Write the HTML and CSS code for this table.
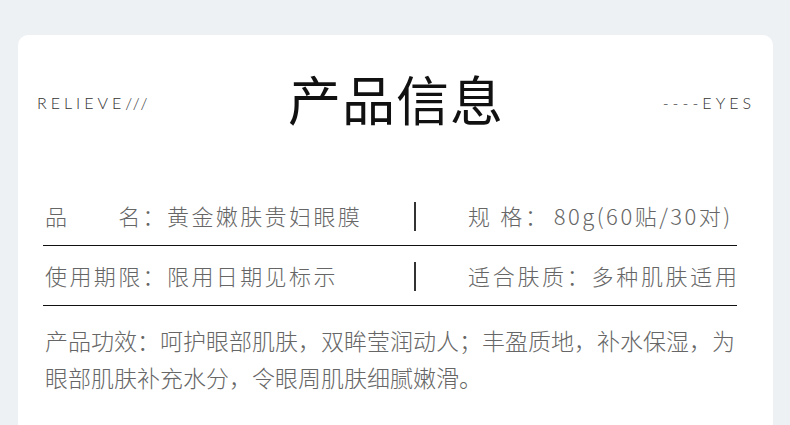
FILE: index.html
```html
<!DOCTYPE html>
<html lang="zh-CN">
<head>
    <meta charset="UTF-8">
    <meta name="viewport" content="width=device-width, initial-scale=1.0">
    <title>产品信息</title>
    <link rel="stylesheet" href="styles.css">
</head>
<body>
    <div class="card">
        <div class="header">
            <span class="tag">RELIEVE///</span>
            <h1>产品信息</h1>
            <span class="tag">----EYES</span>
        </div>

        <div class="info">
            <div class="row">
                <div class="cell">品　　名：黄金嫩肤贵妇眼膜</div>
                <div class="divider"></div>
                <div class="cell right">规 格：<span class="num">80g(60贴/30对)</span></div>
            </div>
            <div class="row">
                <div class="cell">使用期限：限用日期见标示</div>
                <div class="divider"></div>
                <div class="cell right">适合肤质：多种肌肤适用</div>
            </div>
        </div>

        <p class="desc">产品功效：呵护眼部肌肤，双眸莹润动人；丰盈质地，补水保湿，为眼部肌肤补充水分，令眼周肌肤细腻嫩滑。</p>
    </div>
</body>
</html>
```

FILE: styles.css
```css
body {
    margin: 0;
    padding: 35px 17px 0 18px;
    background-color: #edf1f4;
    font-family: "Noto Sans CJK SC", "Noto Sans", sans-serif;
    overflow: hidden;
}

.card {
    background-color: #fff;
    border-radius: 10px 10px 0 0;
    height: 390px;
}

.header {
    display: flex;
    justify-content: space-between;
    align-items: center;
    height: 134px;
    padding: 0 22px 0 19px;
}

.header h1 {
    margin: -7px 0 0;
    font-size: 53px;
    font-weight: 400;
    line-height: 1;
    color: #111;
    letter-spacing: 1px;
}

.tag {
    width: 130px;
    font-family: Lato, "Open Sans", sans-serif;
    font-weight: 300;
    font-size: 16px;
    letter-spacing: 4px;
    color: #333;
}

.tag:last-child {
    text-align: right;
    margin-right: -4px;
}

.info {
    margin: 17px 36px 0 25px;
}

.row {
    display: flex;
    align-items: center;
    height: 59px;
    border-bottom: 1px solid #111;
}

.cell {
    font-size: 22px;
    font-weight: 300;
    letter-spacing: 2.4px;
    color: #666;
    white-space: nowrap;
    margin-top: -2px;
}

.row .cell:first-child {
    flex: 0 0 369px;
    padding-left: 2px;
}

.cell.right {
    flex: 1;
    padding-left: 52px;
    letter-spacing: 2.7px;
}

.num {
    letter-spacing: 2.5px;
    margin-left: 4px;
}

.divider {
    flex: 0 0 2px;
    height: 29px;
    background-color: #333;
    margin-top: 2px;
}

.desc {
    margin: 16px 36px 0 27px;
    font-size: 23px;
    font-weight: 300;
    line-height: 37px;
    color: #666;
}
```
